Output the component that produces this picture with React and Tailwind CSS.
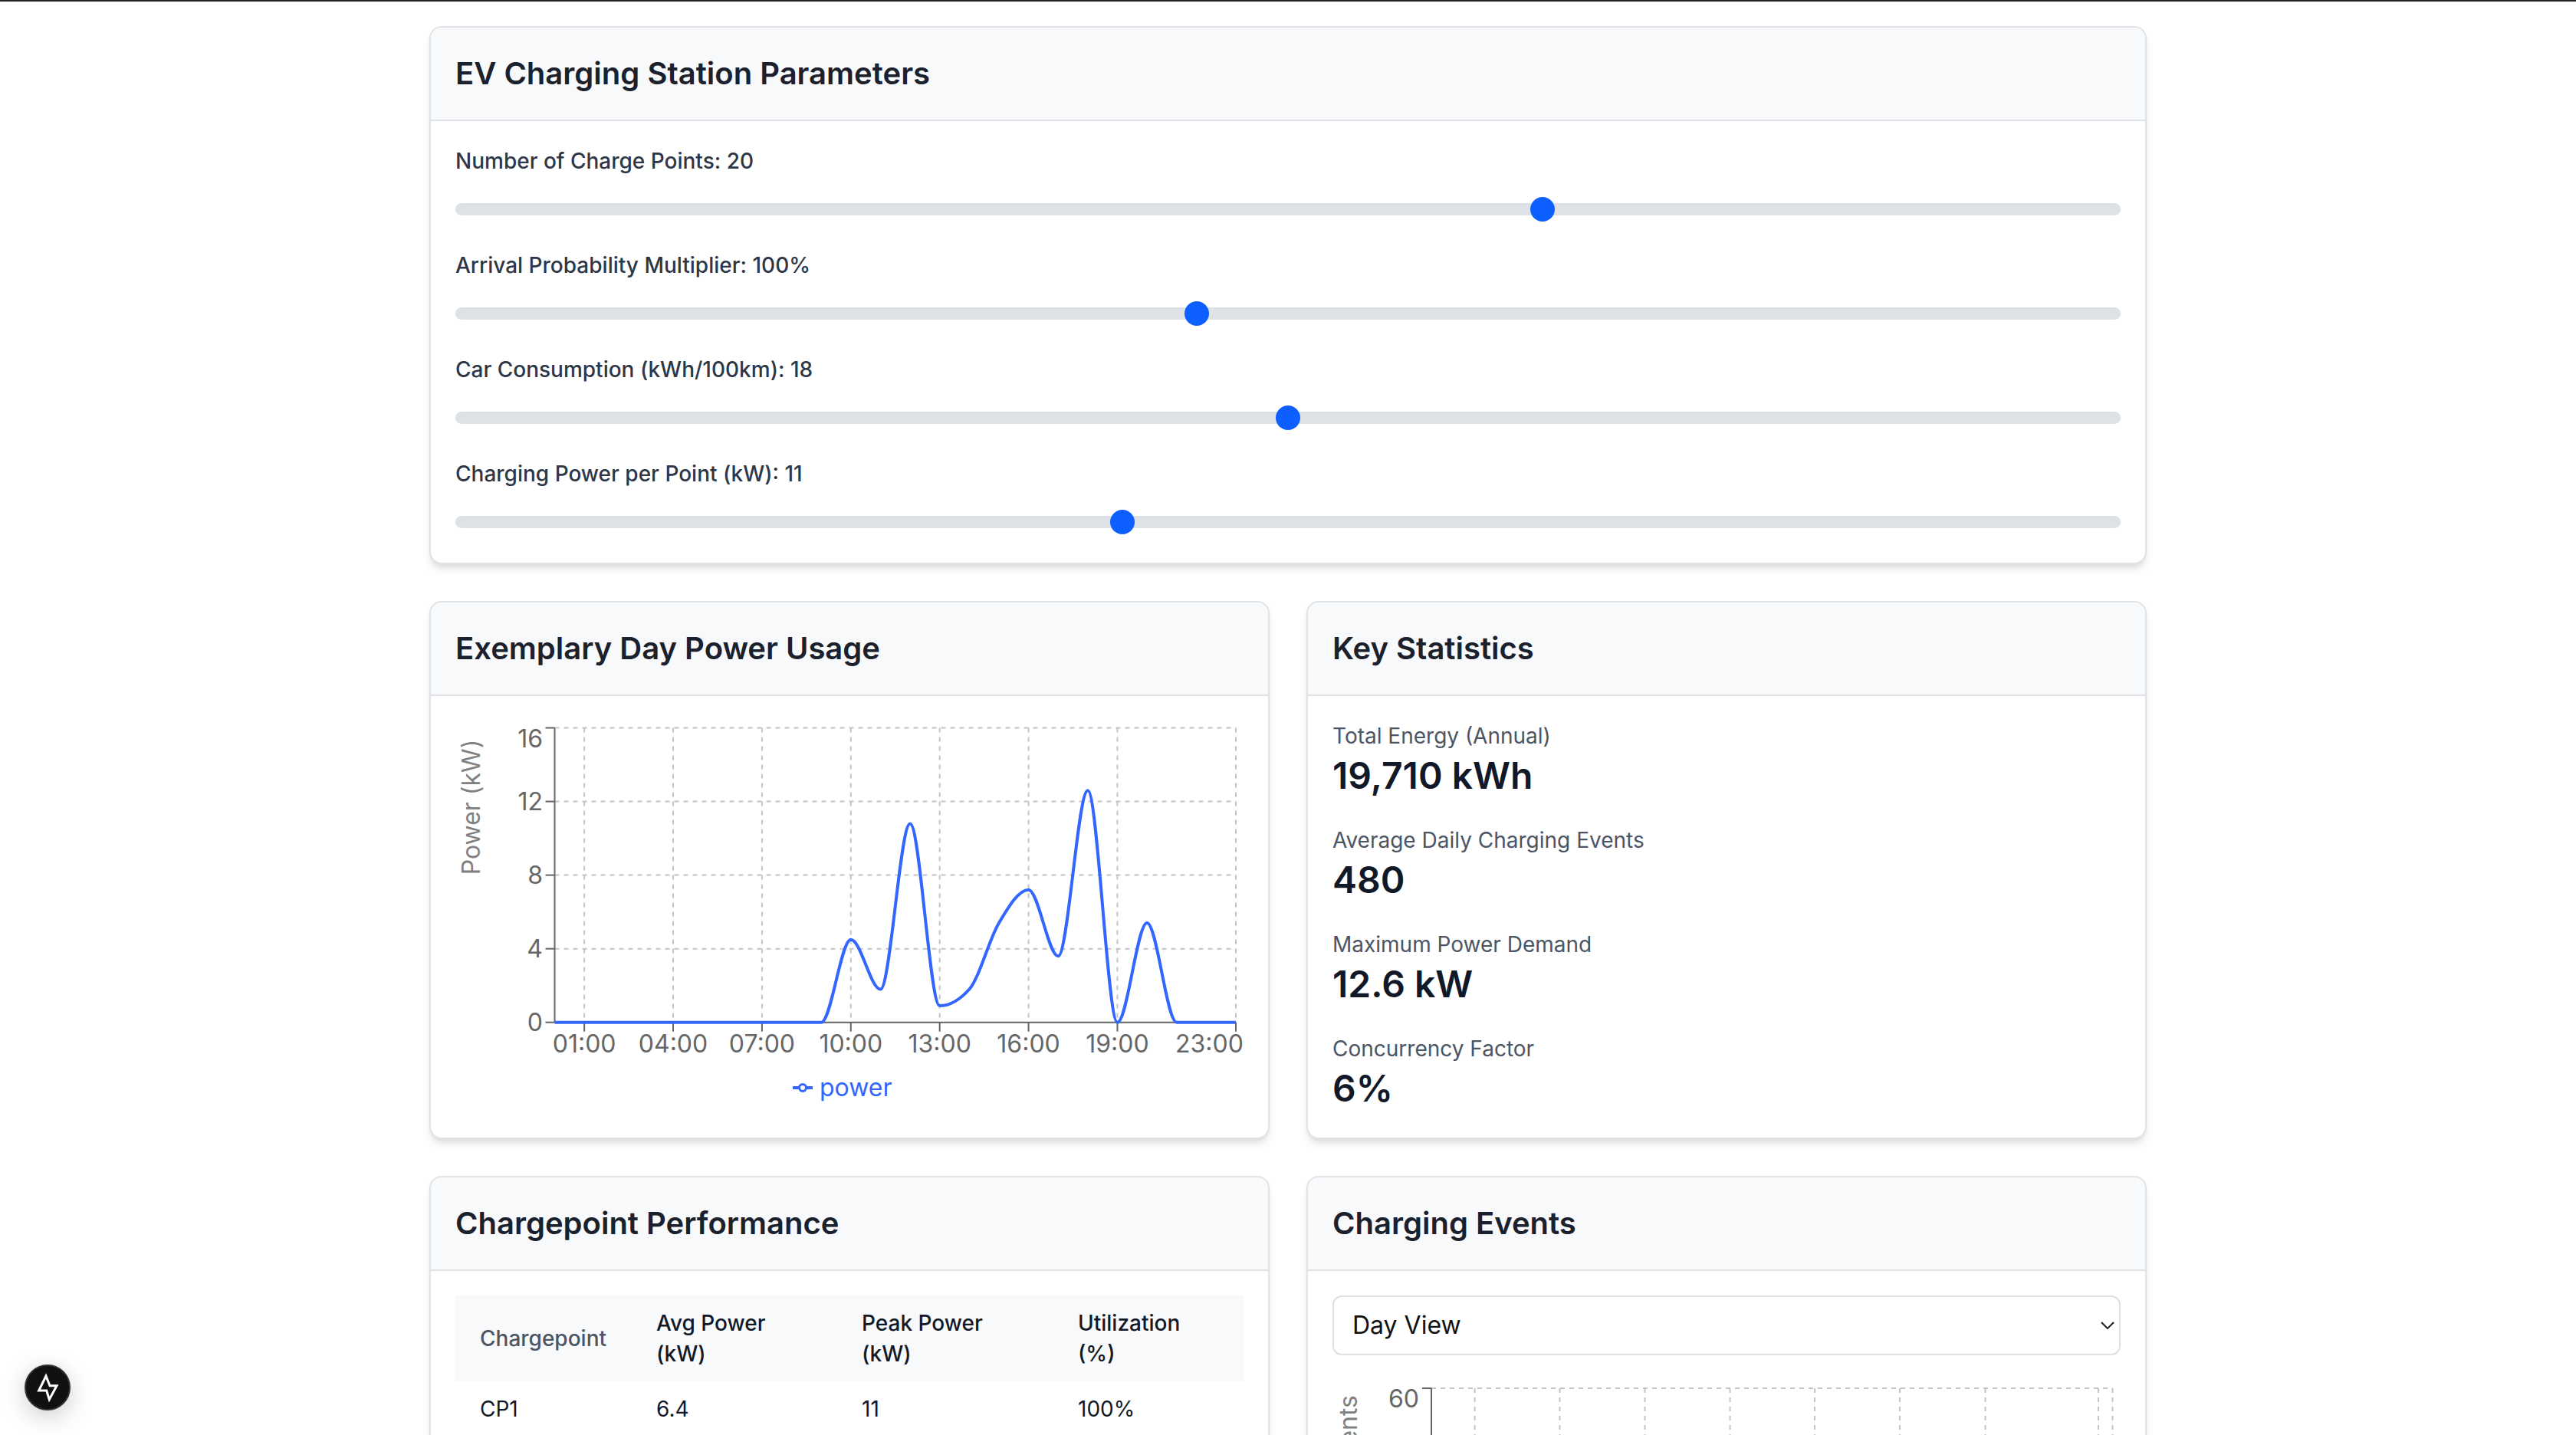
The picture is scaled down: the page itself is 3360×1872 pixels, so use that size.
import React from "react";

const fontStack = "font-['Inter','Noto_Sans',sans-serif]";

function Card({ title, children, bodyClass = "" }) {
  return (
    <div className="rounded-[16px] border-2 border-[#dee2e6] bg-white shadow-[0_8px_12px_-2px_rgba(0,0,0,0.1),0_4px_8px_-4px_rgba(0,0,0,0.1)] overflow-hidden">
      <div className="h-[122px] border-b-2 border-[#dee2e6] bg-[#f8f9fa] px-[32px] py-[32px]">
        <h2 className="text-[40px] leading-[56px] font-semibold text-[#1a202c]">{title}</h2>
      </div>
      <div className={"p-[32px] " + bodyClass}>{children}</div>
    </div>
  );
}

const sliders = [
  { label: "Number of Charge Points: 20", thumb: 2012 },
  { label: "Arrival Probability Multiplier: 100%", thumb: 1561 },
  { label: "Car Consumption (kWh/100km): 18", thumb: 1680 },
  { label: "Charging Power per Point (kW): 11", thumb: 1464 },
];

function Slider({ label, thumb }) {
  return (
    <div className="h-[104px]">
      <div className="text-[28px] leading-[40px] font-medium text-[#2d3748]">{label}</div>
      <div className="relative mt-[35px] h-[16px] rounded-full bg-[#dee2e6]">
        <div
          className="absolute top-[-8px] h-[32px] w-[32px] -translate-x-1/2 rounded-full bg-[#0d5fff]"
          style={{ left: thumb - 594 }}
        />
      </div>
    </div>
  );
}

const values = [0, 0, 0, 0, 0, 0, 0, 0, 0, 0, 4.5, 1.8, 10.8, 0.9, 1.8, 5.4, 7.2, 3.6, 12.6, 0, 5.4, 0, 0, 0];

function monotonePath(pts) {
  const sign = (v) => (v < 0 ? -1 : 1);
  const n = pts.length;
  const m = new Array(n).fill(0);
  const d = [];
  for (let i = 0; i < n - 1; i++) {
    d.push((pts[i + 1][1] - pts[i][1]) / (pts[i + 1][0] - pts[i][0]));
  }
  for (let i = 1; i < n - 1; i++) {
    const h0 = pts[i][0] - pts[i - 1][0];
    const h1 = pts[i + 1][0] - pts[i][0];
    const p = (d[i - 1] * h1 + d[i] * h0) / (h0 + h1);
    m[i] = (sign(d[i - 1]) + sign(d[i])) * Math.min(Math.abs(d[i - 1]), Math.abs(d[i]), 0.5 * Math.abs(p)) || 0;
  }
  m[0] = d[0];
  m[n - 1] = d[n - 2];
  let s = `M${pts[0][0]},${pts[0][1]}`;
  for (let i = 0; i < n - 1; i++) {
    const h = (pts[i + 1][0] - pts[i][0]) / 3;
    s += `C${pts[i][0] + h},${pts[i][1] + m[i] * h} ${pts[i + 1][0] - h},${pts[i + 1][1] - m[i + 1] * h} ${pts[i + 1][0]},${pts[i + 1][1]}`;
  }
  return s;
}

const X0 = 723.5;
const XH = 38.63;
const Y0 = 1333.7;
const YK = 24.01;
const GRID = "#c4c4c4";

function PowerChart() {
  const pts = values.map((v, h) => [X0 + XH * h, Y0 - v * YK]);
  const hours = [
    { h: 1, t: "01:00" },
    { h: 4, t: "04:00" },
    { h: 7, t: "07:00" },
    { h: 10, t: "10:00" },
    { h: 13, t: "13:00" },
    { h: 16, t: "16:00" },
    { h: 19, t: "19:00" },
    { h: 23, t: "23:00" },
  ];
  const ys = [0, 4, 8, 12, 16];
  const right = X0 + XH * 23;
  return (
    <svg viewBox="594 940 1028 512" className="block h-[512px] w-full">
      {ys.slice(1).map((v) => (
        <line key={v} x1={X0} x2={right} y1={Y0 - v * YK} y2={Y0 - v * YK} stroke={GRID} strokeWidth="2" strokeDasharray="6 6" />
      ))}
      {hours.map(({ h }) => (
        <line key={h} x1={X0 + XH * h} x2={X0 + XH * h} y1={Y0 - 16 * YK} y2={Y0} stroke={GRID} strokeWidth="2" strokeDasharray="6 6" />
      ))}
      <line x1={X0} x2={X0} y1={Y0 - 16 * YK} y2={Y0} stroke="#666" strokeWidth="2" />
      <line x1={X0} x2={right} y1={Y0} y2={Y0} stroke="#666" strokeWidth="2" />
      {ys.map((v) => (
        <line key={v} x1={X0 - 12} x2={X0} y1={Y0 - v * YK} y2={Y0 - v * YK} stroke="#666" strokeWidth="2" />
      ))}
      {hours.map(({ h }) => (
        <line key={h} x1={X0 + XH * h} x2={X0 + XH * h} y1={Y0} y2={Y0 + 12} stroke="#666" strokeWidth="2" />
      ))}
      {ys.map((v) => (
        <text key={v} x="708" y={(v === 16 ? 963.6 : Y0 - v * YK) + 11.5} textAnchor="end" fontSize="32" fill="#666">
          {v}
        </text>
      ))}
      {hours.map(({ h, t }) => (
        <text key={h} x={h === 23 ? 1577.5 : X0 + XH * h} y="1373" textAnchor="middle" fontSize="32" fill="#666">
          {t}
        </text>
      ))}
      <text transform="translate(626 1053) rotate(-90)" textAnchor="middle" fontSize="32" fill="#808080">
        Power (kW)
      </text>
      <path d={monotonePath(pts)} fill="none" stroke="#3366ff" strokeWidth="4" />
      <line x1="1034" x2="1060" y1="1419" y2="1419" stroke="#3366ff" strokeWidth="4" />
      <circle cx="1047" cy="1419" r="4.5" fill="#fff" stroke="#3366ff" strokeWidth="3" />
      <text x="1069" y="1430" fontSize="32" fill="#3366ff">
        power
      </text>
    </svg>
  );
}

const stats = [
  { k: "Total Energy (Annual)", v: "19,710 kWh" },
  { k: "Average Daily Charging Events", v: "480" },
  { k: "Maximum Power Demand", v: "12.6 kW" },
  { k: "Concurrency Factor", v: "6%" },
];

function EventsChart() {
  const xs = [1923.6, 2034.5, 2145.5, 2256.5, 2367, 2478, 2589.5, 2737, 2755.5];
  return (
    <svg viewBox="1738 1800 1028 120" className="mt-[32px] block h-[120px] w-full">
      <line x1="1867" x2="2755.5" y1="1811" y2="1811" stroke={GRID} strokeWidth="2" strokeDasharray="6 6" />
      {xs.map((x) => (
        <line key={x} x1={x} x2={x} y1="1811" y2="1920" stroke={GRID} strokeWidth="2" strokeDasharray="6 6" />
      ))}
      <line x1="1867" x2="1867" y1="1811" y2="1920" stroke="#666" strokeWidth="2" />
      <line x1="1855" x2="1867" y1="1811" y2="1811" stroke="#666" strokeWidth="2" />
      <text x="1851" y="1835.5" textAnchor="end" fontSize="32" fill="#666">
        60
      </text>
      <text transform="translate(1770 1820) rotate(-90)" textAnchor="end" fontSize="32" fill="#808080">
        Number of Charging Events
      </text>
    </svg>
  );
}

export default function App() {
  return (
    <div className={"relative h-[1872px] overflow-hidden bg-white " + fontStack}>
      <div className="h-[2px] bg-[#212529]" />
      <div className="mx-auto flex w-[2240px] flex-col gap-[48px] pt-[32px]">
        <Card title="EV Charging Station Parameters" bodyClass="flex flex-col gap-[32px]">
          {sliders.map((s) => (
            <Slider key={s.label} {...s} />
          ))}
        </Card>
        <div className="grid grid-cols-2 gap-[48px]">
          <Card title="Exemplary Day Power Usage">
            <PowerChart />
          </Card>
          <Card title="Key Statistics" bodyClass="flex flex-col gap-[32px]">
            {stats.map((s) => (
              <div key={s.k} className="h-[104px]">
                <div className="text-[28px] leading-[40px] text-[#4b5563]">{s.k}</div>
                <div className="text-[48px] leading-[64px] font-semibold text-[#111827]">{s.v}</div>
              </div>
            ))}
          </Card>
        </div>
        <div className="grid grid-cols-2 gap-[48px]">
          <Card title="Chargepoint Performance">
            <table className="w-full table-fixed border-collapse text-[28px] leading-[40px]">
              <thead>
                <tr className="bg-[#f8f9fa] text-left font-medium text-[#111827]">
                  <th className="w-[230px] px-[32px] py-[16px] font-medium text-[#4b5563]">Chargepoint</th>
                  <th className="w-[268px] px-[32px] py-[16px] font-medium">
                    Avg Power<br />(kW)
                  </th>
                  <th className="w-[282px] px-[32px] py-[16px] font-medium">
                    Peak Power<br />(kW)
                  </th>
                  <th className="px-[32px] py-[16px] font-medium">
                    Utilization<br />(%)
                  </th>
                </tr>
              </thead>
              <tbody className="text-[#111827]">
                <tr>
                  <td className="px-[32px] py-[16px]">CP1</td>
                  <td className="px-[32px] py-[16px]">6.4</td>
                  <td className="px-[32px] py-[16px]">11</td>
                  <td className="px-[32px] py-[16px]">100%</td>
                </tr>
              </tbody>
            </table>
          </Card>
          <Card title="Charging Events">
            <div className="relative">
              <select className="block h-[78px] w-full appearance-none rounded-[12px] border-2 border-[#e0e0e0] bg-white pl-[24px] text-[32px] text-[#111]">
                <option>Day View</option>
              </select>
              <svg viewBox="0 0 18 10" className="absolute right-[8px] top-[34px] h-[10px] w-[18px]" fill="none" stroke="#222" strokeWidth="2">
                <path d="M1 1l8 8 8-8" />
              </svg>
            </div>
            <EventsChart />
          </Card>
        </div>
      </div>
      <div className="absolute left-[32px] top-[1780px] flex h-[60px] w-[60px] items-center justify-center rounded-full border-2 border-[#333] bg-[#111] shadow-[0_8px_32px_rgba(0,0,0,0.2)]">
        <svg viewBox="2 2 56 56" className="h-[56px] w-[56px]" fill="none" stroke="#fff" strokeWidth="3" strokeLinejoin="miter">
          <path d="M28 15 33 27.7H42L32.3 45.7 28.7 34H18.7Z" />
        </svg>
      </div>
    </div>
  );
}
